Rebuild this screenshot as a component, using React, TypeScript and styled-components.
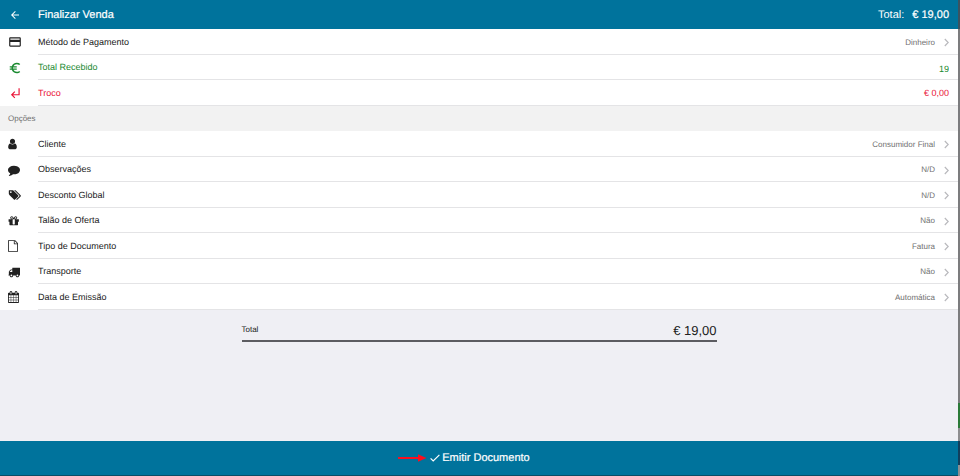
import React from "react";
import styled, { createGlobalStyle } from "styled-components";
import { MdArrowBack, MdEuroSymbol, MdPayment, MdSubdirectoryArrowLeft } from "react-icons/md";

const GlobalStyle = createGlobalStyle`
  * { box-sizing: border-box; }
  body { margin: 0; background: #efeff4; text-rendering: geometricPrecision; }
  body, button, input { font-family: "Liberation Sans", Arial, sans-serif; }
  button, input { border: 0; padding: 0; background: none; color: inherit; text-rendering: inherit; }
  button { cursor: pointer; }
`;

const Screen = styled.div`
  display: flex;
  min-height: 100vh;
  color: #212121;
`;

const Page = styled.div`
  flex: 1;
  min-width: 0;
  display: flex;
  flex-direction: column;
`;

const WindowEdge = styled.div`
  flex: none;
  width: 2px;
  background: linear-gradient(#3c5360 0 29px, #7c7c7e 29px 403px, #2b7a38 403px 428px, #8e8e90 428px 441px, #123f5c 441px 465px, #8e8e90 465px);
`;

const Header = styled.header`
  display: grid;
  grid-template-columns: 38px 1fr auto;
  align-items: center;
  height: 29px;
  padding-right: 9px;
  background: #00739c;
  color: #fff;
`;

const BackButton = styled.button`
  display: flex;
  width: 38px;
  padding-left: 9px;
  font-size: 12px;
`;

const Title = styled.h1`
  margin: 0;
  font-size: 11px;
  line-height: 16px;
  font-weight: 400;
  -webkit-text-stroke: 0.2px;
`;

const HeaderTotal = styled.div`
  display: flex;
  gap: 8px;
  font-size: 11px;
  line-height: 16px;
`;

const HeaderAmount = styled.strong`
  font-weight: 400;
  -webkit-text-stroke: 0.2px;
`;

const List = styled.ul`
  margin: 0;
  padding: 0;
  list-style: none;
  background: #fff;
`;

const Item = styled.li<{ $color?: string }>`
  display: grid;
  grid-template-columns: 38px 1fr;
  height: 26px;
  color: ${(p) => p.$color ?? "#212121"};
  &:nth-child(even) { height: 25px; }
`;

const IconCell = styled.span`
  display: flex;
  align-items: center;
  padding-left: 8px;
`;

const Line = styled.div`
  display: flex;
  align-items: center;
  justify-content: space-between;
  border-bottom: 1px solid #e4e4e6;
  padding-right: 9px;
  font-size: 9px;
  line-height: 12px;
`;

const LineButton = styled(Line).attrs({ as: "button", type: "button" })`
  text-align: left;
`;

const Value = styled.span`
  display: flex;
  align-items: center;
  gap: 9px;
  padding-top: 2px;
  color: #707070;
  font-size: 8px;
`;

const AmountInput = styled.input`
  width: 80px;
  padding-top: 3px;
  text-align: right;
  font-size: 9px;
  line-height: 12px;
`;

const GroupTitle = styled.h2`
  margin: 0;
  padding-left: 8px;
  background: #f2f2f2;
  color: #707070;
  font-size: 8px;
  line-height: 25px;
  font-weight: 400;
`;

const Summary = styled.div`
  display: flex;
  justify-content: space-between;
  width: calc(50% - 4px);
  margin: 13px auto;
  padding-bottom: 1px;
  border-bottom: 2px solid #5c5c61;
`;

const SummaryLabel = styled.span`
  font-size: 8px;
  line-height: 14px;
`;

const SummaryAmount = styled.span`
  font-size: 13px;
  line-height: 16px;
`;

const SubmitButton = styled.button`
  display: flex;
  align-items: center;
  justify-content: center;
  gap: 2px;
  height: 35px;
  margin-top: auto;
  padding-right: 30px;
  border-bottom: 1px solid #0b4d66;
  background: #00739c;
  color: #fff;
  font-size: 11px;
  line-height: 16px;
  -webkit-text-stroke: 0.2px;
`;

const shapes = {
  user: "M1536 1399q0 109-62.5 187t-150.5 78h-854q-88 0-150.5-78t-62.5-187q0-85 8.5-160.5t31.5-152 58.5-131 94-89 134.5-34.5q131 128 313 128t313-128q76 0 134.5 34.5t94 89 58.5 131 31.5 152 8.5 160.5zm-256-887q0 159-112.5 271.5t-271.5 112.5-271.5-112.5-112.5-271.5 112.5-271.5 271.5-112.5 271.5 112.5 112.5 271.5z",
  comment: "M1792 896q0 174-120 321.5t-326 233-450 85.5q-70 0-145-8-198 175-460 242-49 14-114 22-17 2-30.5-9t-17.5-29v-1q-3-4-.5-12t2-10 4.5-9.5l6-9 7-8.5 8-9q7-8 31-34.5t34.5-38 31-39.5 32.5-51 27-59 26-76q-157-89-247.5-220t-90.5-281q0-130 71-248.5t191-204.5 286-136.5 348-50.5q244 0 450 85.5t326 233 120 321.5z",
  tags: "M576 448q0-53-37.5-90.5t-90.5-37.5-90.5 37.5-37.5 90.5 37.5 90.5 90.5 37.5 90.5-37.5 37.5-90.5zm1067 576q0 53-37 90l-491 492q-39 37-91 37-53 0-90-37l-715-716q-38-37-64.5-101t-26.5-117v-416q0-52 38-90t90-38h416q53 0 117 26.5t102 64.5l715 714q37 39 37 91zm384 0q0 53-37 90l-491 492q-39 37-91 37-36 0-59-14t-53-45l470-470q37-37 37-90 0-52-37-91l-715-714q-38-38-102-64.5t-117-26.5h224q53 0 117 26.5t102 64.5l715 714q37 39 37 91z",
  gift: "M1056 1356v-716h-320v716q0 25 18 38.5t46 13.5h192q28 0 46-13.5t18-38.5zm-456-844h195l-126-161q-26-31-69-31-40 0-68 28t-28 68 28 68 68 28zm688-96q0-40-28-68t-68-28q-43 0-69 31l-125 161h194q40 0 68-28t28-68zm376 256v320q0 14-9 23t-23 9h-96v416q0 40-28 68t-68 28h-1088q-40 0-68-28t-28-68v-416h-96q-14 0-23-9t-9-23v-320q0-14 9-23t23-9h440q-93 0-158.5-65.5t-65.5-158.5 65.5-158.5 158.5-65.5q107 0 168 77l128 165 128-165q61-77 168-77 93 0 158.5 65.5t65.5 158.5-65.5 158.5-158.5 65.5h440q14 0 23 9t9 23z",
  file: "M1596 380q28 28 48 76t20 88v1152q0 40-28 68t-68 28h-1344q-40 0-68-28t-28-68v-1600q0-40 28-68t68-28h896q40 0 88 20t76 48zm-444-244v376h376q-10-29-22-41l-313-313q-12-12-41-22zm384 1528v-1024h-416q-40 0-68-28t-28-68v-416h-768v1536h1280z",
  truck: "M640 1408q0-52-38-90t-90-38-90 38-38 90 38 90 90 38 90-38 38-90zm-384-512h384v-256h-158q-13 0-22 9l-195 195q-9 9-9 22v30zm1280 512q0-52-38-90t-90-38-90 38-38 90 38 90 90 38 90-38 38-90zm256-1088v1024q0 15-4 26.5t-13.5 18.5-16.5 11.5-23.5 6-22.5 2-25.5 0-22.5-.5q0 106-75 181t-181 75-181-75-75-181h-384q0 106-75 181t-181 75-181-75-75-181h-64q-3 0-22.5.5t-25.5 0-22.5-2-23.5-6-16.5-11.5-13.5-18.5-4-26.5q0-26 19-45t45-19v-320q0-8-.5-35t0-38 2.5-34.5 6.5-37 14-30.5 22.5-30l198-198q19-19 50.5-32t58.5-13h160v-192q0-26 19-45t45-19h1024q26 0 45 19t19 45z",
  calendar: "M192 1664h288v-288h-288v288zm352 0h320v-288h-320v288zm-352-352h288v-320h-288v320zm352 0h320v-320h-320v320zm-352-384h288v-288h-288v288zm736 736h320v-288h-320v288zm-384-736h320v-288h-320v288zm768 736h288v-288h-288v288zm-384-352h320v-320h-320v320zm-352-864v-288q0-13-9.5-22.5t-22.5-9.5h-64q-13 0-22.5 9.5t-9.5 22.5v288q0 13 9.5 22.5t22.5 9.5h64q13 0 22.5-9.5t9.5-22.5zm736 864h288v-320h-288v320zm-384-384h320v-288h-320v288zm384 0h288v-288h-288v288zm32-480v-288q0-13-9.5-22.5t-22.5-9.5h-64q-13 0-22.5 9.5t-9.5 22.5v288q0 13 9.5 22.5t22.5 9.5h64q13 0 22.5-9.5t9.5-22.5zm384-64v1280q0 52-38 90t-90 38h-1408q-52 0-90-38t-38-90v-1280q0-52 38-90t90-38h128v-96q0-66 47-113t113-47h64q66 0 113 47t47 113v96h384v-96q0-66 47-113t113-47h64q66 0 113 47t47 113v96h128q52 0 90 38t38 90z",
};

// Left edge and width of each glyph in its own units, then its drawn width.
const crops: Record<keyof typeof shapes, [number, number, number]> = {
  user: [256, 1280, 9],
  comment: [0, 1792, 12],
  tags: [0, 2048, 13],
  gift: [64, 1600, 11],
  file: [128, 1536, 10],
  truck: [0, 1792, 12],
  calendar: [64, 1664, 11],
};

function Glyph({ name }: { name: keyof typeof shapes }) {
  const [x, w, drawn] = crops[name];
  return (
    <svg width={drawn} height={12} viewBox={`${x} 0 ${w} 1792`} fill="currentColor" aria-hidden="true">
      <path d={shapes[name]} />
    </svg>
  );
}

function Chevron() {
  return (
    <svg width="5" height="9" viewBox="0 0 5 9" fill="none" stroke="#b9b9bd" strokeWidth="1.2" aria-hidden="true">
      <path d="M0.8 1 4.2 4.5 0.8 8" />
    </svg>
  );
}

const options: { icon: keyof typeof shapes; label: string; value: string }[] = [
  { icon: "user", label: "Cliente", value: "Consumidor Final" },
  { icon: "comment", label: "Observações", value: "N/D" },
  { icon: "tags", label: "Desconto Global", value: "N/D" },
  { icon: "gift", label: "Talão de Oferta", value: "Não" },
  { icon: "file", label: "Tipo de Documento", value: "Fatura" },
  { icon: "truck", label: "Transporte", value: "Não" },
  { icon: "calendar", label: "Data de Emissão", value: "Automática" },
];

export default function App() {
  return (
    <Screen>
      <GlobalStyle />
      <Page>
        <Header>
          <BackButton type="button" aria-label="Voltar"><MdArrowBack /></BackButton>
          <Title>Finalizar Venda</Title>
          <HeaderTotal><span>Total:</span><HeaderAmount>€ 19,00</HeaderAmount></HeaderTotal>
        </Header>
        <List>
          <Item>
            <IconCell><MdPayment size={14} /></IconCell>
            <LineButton>Método de Pagamento<Value>Dinheiro<Chevron /></Value></LineButton>
          </Item>
          <Item $color="#1a8a30">
            <IconCell><MdEuroSymbol size={14} /></IconCell>
            <Line><label htmlFor="received">Total Recebido</label><AmountInput id="received" defaultValue="19" inputMode="decimal" /></Line>
          </Item>
          <Item $color="#ea1538">
            <IconCell><MdSubdirectoryArrowLeft size={14} /></IconCell>
            <Line><span>Troco</span><span>€ 0,00</span></Line>
          </Item>
        </List>
        <GroupTitle>Opções</GroupTitle>
        <List>
          {options.map((o) => (
            <Item key={o.label}>
              <IconCell><Glyph name={o.icon} /></IconCell>
              <LineButton>{o.label}<Value>{o.value}<Chevron /></Value></LineButton>
            </Item>
          ))}
        </List>
        <Summary>
          <SummaryLabel>Total</SummaryLabel>
          <SummaryAmount>€ 19,00</SummaryAmount>
        </Summary>
        <SubmitButton type="button">
          <svg width="30" height="8" viewBox="0 0 30 8" aria-hidden="true">
            <path d="M0 4h21" stroke="#fa0f1e" strokeWidth="2" />
            <path d="M20 0.3 28.5 4 20 7.7z" fill="#fa0f1e" />
          </svg>
          <svg width="10" height="8" viewBox="0 0 10 8" fill="none" stroke="currentColor" strokeWidth="1.2" aria-hidden="true">
            <path d="M0.6 4.4 3.2 7 9.4 0.8" />
          </svg>
          Emitir Documento
        </SubmitButton>
      </Page>
      <WindowEdge />
    </Screen>
  );
}
